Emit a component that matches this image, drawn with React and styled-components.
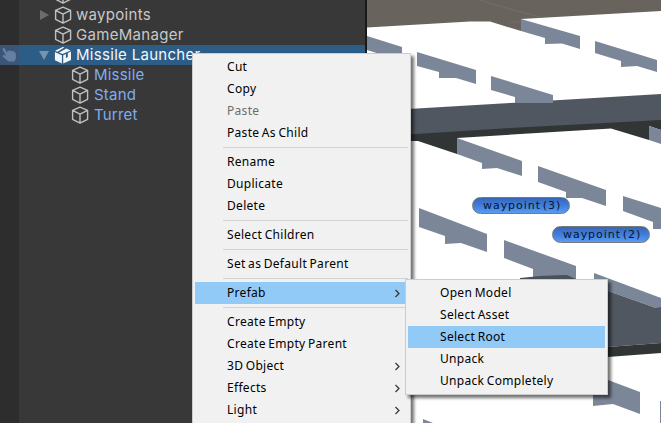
import React from 'react';
import styled, { createGlobalStyle } from 'styled-components';

const GlobalStyle = createGlobalStyle`
  * { box-sizing: border-box; }
  body { margin: 0; overflow: hidden; background: #383838; }
`;

const Editor = styled.div`
  position: relative;
  display: flex;
  width: 661px;
  height: 423px;
  overflow: hidden;
`;

const Hierarchy = styled.aside`
  width: 367px;
  flex: none;
  border-right: 2px solid #191919;
  background: linear-gradient(90deg, #2d2d2d 19px, #383838 19px);
  overflow: hidden;
`;

const Tree = styled.div`
  margin-top: -15px;
`;

const TreeRow = styled.div`
  display: flex;
  align-items: center;
  height: 20px;
  padding-left: ${p => (p.$child ? 71 : 0)}px;
  background: ${p => (p.$selected ? 'linear-gradient(90deg, #3b5579 19px, #2c5d87 19px)' : 'none')};
  color: ${p => (p.$selected ? '#f4f7fa' : p.$child ? '#7fadf1' : '#c8c8c8')};
  font: 15px/20px Inter, sans-serif;
  letter-spacing: ${p => (p.$child ? 0.2 : 0.3)}px;
  white-space: nowrap;
  svg { flex: none; }
`;

const Gutter = styled.span`
  display: flex;
  width: 19px;
  flex: none;
`;

const Fold = styled.span`
  display: flex;
  justify-content: center;
  width: 14px;
  margin-left: 18px;
  margin-right: 3px;
  flex: none;
`;

const TreeName = styled.span`
  margin-left: ${p => (p.$child ? 5 : 4)}px;
`;

const Viewport = styled.main`
  position: relative;
  flex: 1;
  background: #fefffe;
  overflow: hidden;
  svg { display: block; }
`;

const Waypoint = styled.span`
  position: absolute;
  left: ${p => p.$x}px;
  top: ${p => p.$y}px;
  width: 98px;
  height: 17px;
  padding-left: 10px;
  border: 1px solid #76797e;
  border-radius: 9px;
  background: linear-gradient(#3766b6, #4380dc 55%, #5a9bf3);
  color: #05152f;
  font: 11px/15px "DejaVu Sans", sans-serif;
  letter-spacing: 0.95px;
  word-spacing: -2.6px;
  white-space: nowrap;
`;

const Menu = styled.div`
  position: absolute;
  left: ${p => p.$x}px;
  top: ${p => p.$y}px;
  width: ${p => p.$w}px;
  padding: 2px 2px ${p => p.$bottom || 2}px;
  border: 1px solid #ccc;
  background: #f1f1f1;
  box-shadow: 3px 3px 3px rgba(0, 0, 0, 0.55);
`;

const MenuItem = styled.div`
  display: flex;
  align-items: center;
  justify-content: space-between;
  height: 22px;
  padding: 0 8px 0 32px;
  background: ${p => (p.$active ? '#91c9f7' : 'transparent')};
  color: ${p => (p.$disabled ? '#6d6d6d' : '#000')};
  font: 12px/22px "Noto Sans", sans-serif;
  letter-spacing: 0.3px;
  word-spacing: -0.9px;
  white-space: nowrap;
`;

const Separator = styled.div`
  height: 7px;
  padding: 3px 0 0 28px;
  &::after { content: ''; display: block; height: 1px; background: #d2d2d2; }
`;

const Cube = () => (
  <svg width="18" height="18" viewBox="0 0 18 18" fill="none" stroke="#c0c0c0" strokeWidth="1.4" strokeLinejoin="round">
    <path d="M9 1.1 16.6 4.4V13.3L9 17.1 1.6 13.3V4.4ZM1.6 4.4 9 8.2 16.6 4.4M9 8.2V17.1" />
  </svg>
);

const PrefabCube = () => (
  <svg width="18" height="18" viewBox="0 0 18 18" fill="#f2f5f8">
    <path d="M.9 6 7.9 9.2V17.4L.9 14.2ZM9.2 9.2 11.9 8V12L13.8 11V7L17 5.6V14L9.2 17.6ZM1.1 4.7 8.8.9 10.4 1.6 3.4 5.7ZM5 6.5 12.4 2.4 16.6 4.4 8.6 8Z" />
  </svg>
);

const Hand = () => (
  <svg width="19" height="20" viewBox="0 0 19 20" fill="#6380a1">
    <path d="M2.5 4.2C3 2.5 4.5 2.7 5 4L6.8 7.6 8 5.6 10 6 11.2 5.6 12.4 6.3 14 6.2 15.7 8.2 16.2 12.5 14.5 16.6H8.5L2.8 11.8C2.2 9.8 4 9.4 6 11Z" />
  </svg>
);

const Arrow = ({ open }) => (
  <svg width="12" height="12" viewBox="0 0 12 12" fill={open ? '#7893ac' : '#6c6c6c'}>
    <path d={open ? 'M1 2H11L6 11Z' : 'M2 1 11 6 2 11Z'} />
  </svg>
);

const Chevron = () => (
  <svg width="5" height="9" viewBox="0 0 5 9" fill="none" stroke="#333" strokeWidth="1.2">
    <path d="M.5 1 4 4.5 .5 8" />
  </svg>
);

const walls = [
  '367,36 402,47 402,61 367,50',
  '417,52 476,70 476,84 456,78 439,78 439,72 417,66',
  '491,76 553,95 553,103 515,103 515,97 491,90',
  '521,19 580,36 580,49 562,43.5 545,44 545,38 521,31',
  '595,41 657,60 657,72 637,66 621,67 621,61 595,53',
  '457,138 522,161 522,176 497,168 482,169 482,163 457,154',
  '649,126 661,130 661,144 649,140',
  '419,208 487,234 487,252 461,243 445,244 445,236 419,227',
  '504,240 576,266 576,280 533,280 533,269 504,258',
  '538,166 606,190 606,206 582,198 566,198 566,192 538,182',
  '623,196 661,208 661,229 653,229 653,222 623,211',
  '594,273 661,298 661,308 656,308 594,286',
  '593,374 608,380 640,392 640,414 613,404 593,406',
  '423,419 433,423 423,423',
  '660,401 661,401 661,423 660,423',
];

const Scene = () => (
  <svg width="294" height="423" viewBox="367 0 294 423">
    <polygon fill="#69635e" points="367,0 661,0 661,11 521,19 521,31 490,21.5 470,21.5 367,27.5" />
    <path d="M479 0 510 9 540 17M510 22H521" stroke="#756f6a" fill="none" />
    <polygon fill="#323535" points="400,130 661,116 661,130 649,126 649,140 611,128.5 457,138 457,154 418,141 400,141" />
    <polygon fill="#515761" points="400,109.5 510,103 661,94 661,120 510,128 400,135" />
    <g fill="#7b8798">{walls.map(w => <polygon key={w} points={w} />)}</g>
    <polygon fill="#4b515a" points="520,278 540,276 563,275 567,275 576,279 576,282 520,282" />
    <polygon fill="#515761" points="594,286 656,308 661,307 661,343 594,348" />
    <polygon fill="#323535" points="594,348 661,343 661,353 594,358" />
  </svg>
);

const mainMenu = [
  'Cut', 'Copy', { name: 'Paste', disabled: true }, 'Paste As Child', null,
  'Rename', 'Duplicate', 'Delete', null,
  'Select Children', null, 'Set as Default Parent', null,
  { name: 'Prefab', active: true, sub: true }, null,
  'Create Empty', 'Create Empty Parent',
  { name: '3D Object', sub: true }, { name: 'Effects', sub: true }, { name: 'Light', sub: true },
];
const prefabMenu = ['Open Model', 'Select Asset', { name: 'Select Root', active: true }, 'Unpack', 'Unpack Completely'];

const ContextMenu = ({ items, x, y, w, bottom }) => (
  <Menu $x={x} $y={y} $w={w} $bottom={bottom}>
    {items.map((entry, i) => {
      if (!entry) return <Separator key={i} />;
      const item = typeof entry === 'string' ? { name: entry } : entry;
      return (
        <MenuItem key={i} $active={item.active} $disabled={item.disabled}>
          {item.name}{item.sub && <Chevron />}
        </MenuItem>
      );
    })}
  </Menu>
);

const Node = ({ name, child, selected, fold }) => (
  <TreeRow $child={child} $selected={selected}>
    {!child && <><Gutter>{selected && <Hand />}</Gutter><Fold>{fold && <Arrow open={fold === 'open'} />}</Fold></>}
    {selected ? <PrefabCube /> : <Cube />}
    <TreeName $child={child}>{name}</TreeName>
  </TreeRow>
);

export default function App() {
  return (
    <>
      <GlobalStyle />
      <Editor>
        <Hierarchy>
          <Tree>
            <Node name="" />
            <Node name="waypoints" fold="closed" />
            <Node name="GameManager" />
            <Node name="Missile Launcher" fold="open" selected />
            <Node name="Missile" child />
            <Node name="Stand" child />
            <Node name="Turret" child />
          </Tree>
        </Hierarchy>
        <Viewport>
          <Scene />
          <Waypoint $x={105} $y={197}>waypoint (3)</Waypoint>
          <Waypoint $x={185} $y={226}>waypoint (2)</Waypoint>
        </Viewport>
        <ContextMenu items={mainMenu} x={192} y={53} w={219} bottom={12} />
        <ContextMenu items={prefabMenu} x={405} y={279} w={203} />
      </Editor>
    </>
  );
}
